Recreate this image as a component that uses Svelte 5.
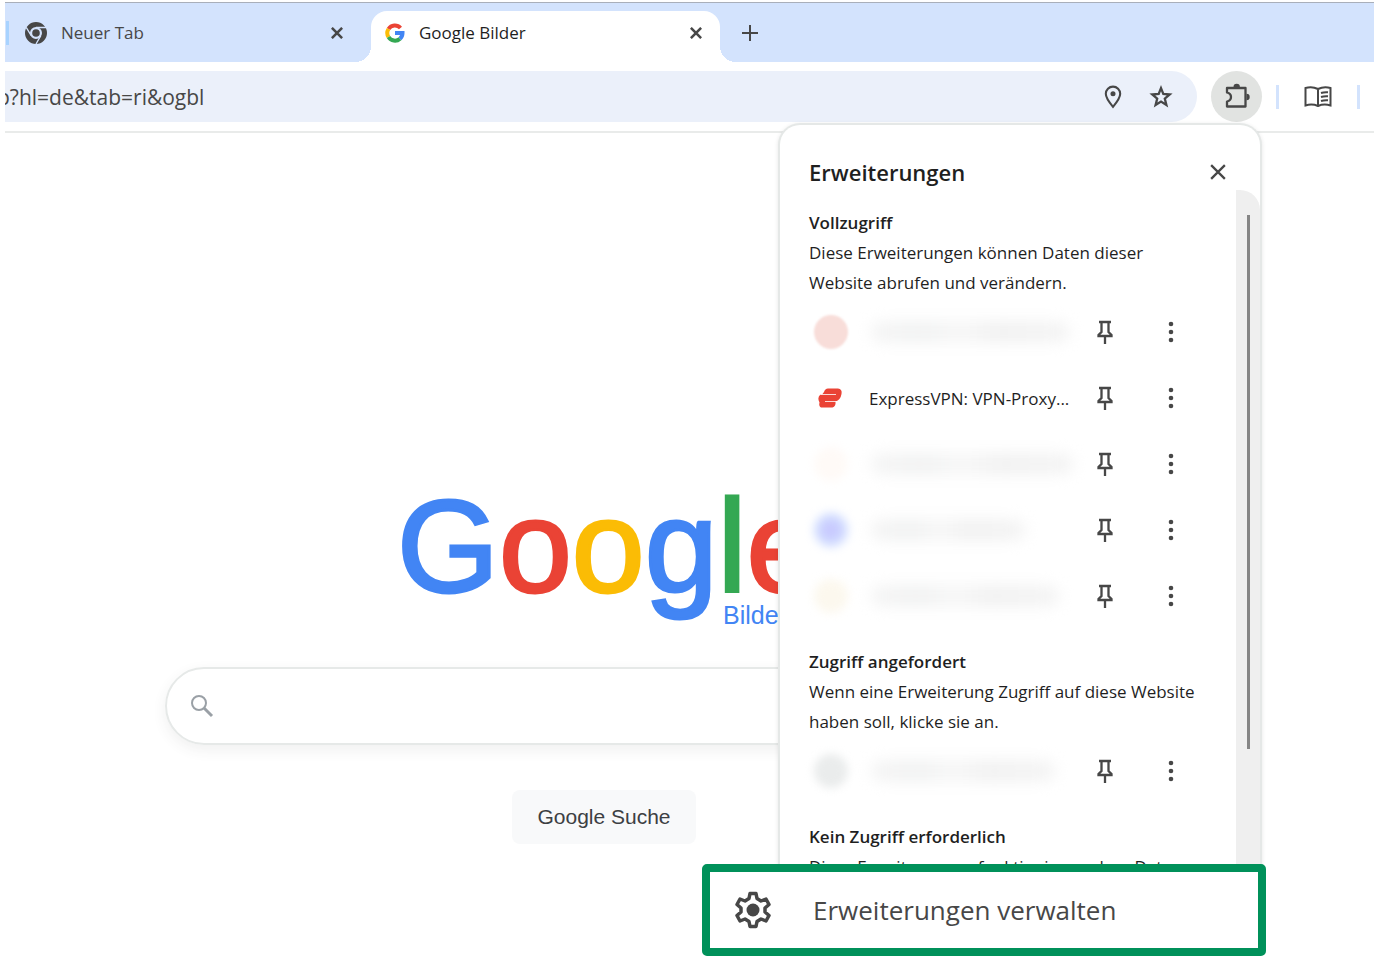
<script>
  const fullAccess = [
    { kind: 'rose', width: 200 },
    { kind: 'express', name: 'ExpressVPN: VPN-Proxy...' },
    { kind: 'peach', width: 204 },
    { kind: 'violet', width: 156 },
    { kind: 'sand', width: 190 }
  ];
  const requested = [{ kind: 'grey', width: 186 }];
  let url = $state('p?hl=de&tab=ri&ogbl');
  let query = $state('');
</script>

{#snippet cross(size, weight)}
  <svg width={size} height={size} viewBox="0 0 14 14" fill="none" stroke="currentColor" stroke-width={weight} aria-hidden="true">
    <path d="M1 1 13 13M13 1 1 13" />
  </svg>
{/snippet}

{#snippet extension(item)}
  <li class="row">
    <span class="badge {item.kind}">
      {#if item.kind === 'express'}
        <svg width="26" height="24" viewBox="0 0 26 24" fill="none" aria-hidden="true">
          <path d="M11 2.500H21Q25.500 3 24.500 8Q23.500 14 18.500 15.500Q19 20.500 15.500 21.500H4Q1.500 20 2.500 16.500Q0 12 3 9Q6 8.500 7 6Q8 2.500 11 2.500Z" fill="#ea4335" />
          <path d="M4 8.500H19M8 15.500H22" stroke="#fff" stroke-opacity=".8" stroke-width="1.200" />
        </svg>
      {/if}
    </span>
    {#if item.name}
      <button class="name">{item.name}</button>
    {:else}
      <span class="smudge"><i style="width: {item.width}px"></i></span>
    {/if}
    <button class="icon" aria-label="Anpinnen">
      <svg width="20" height="26" viewBox="0 0 20 26" fill="none" stroke="#474747" stroke-width="2.300" aria-hidden="true">
        <path d="M4 3H16M6.500 3V13L3.500 16V17H16.500V16L13.500 13V3M10 17V25" />
      </svg>
    </button>
    <button class="icon" aria-label="Weitere Optionen">
      <svg width="6" height="24" viewBox="0 0 6 24" fill="#474747" aria-hidden="true">
        <circle cx="3" cy="4" r="2.300" /><circle cx="3" cy="12" r="2.300" /><circle cx="3" cy="20" r="2.300" />
      </svg>
    </button>
  </li>
{/snippet}

<div class="window">
  <header class="tabs">
    <div class="tab">
      <span class="tick"></span>
      <svg width="22" height="22" viewBox="0 0 22 22" fill="none" aria-hidden="true">
        <circle cx="11" cy="11" r="8.500" stroke="#474747" stroke-width="5" />
        <circle cx="11" cy="11" r="3.800" fill="#474747" />
        <path d="M11 5.500H21M6.200 13.700 1.200 5.300M15.800 13.700 11 22" stroke="#d3e3fd" stroke-width="1.300" />
      </svg>
      <span class="label">Neuer Tab</span>
      <button class="icon" aria-label="Tab schließen">{@render cross(12, 3)}</button>
    </div>
    <div class="tab active">
      <svg width="20" height="20" viewBox="0 0 20 20" fill="none" stroke-width="4" aria-hidden="true">
        <path d="M3.500 6A7.500 7.500 0 0 1 15.500 5" stroke="#ea4335" />
        <path d="M3.500 14A7.500 7.500 0 0 1 3.500 6" stroke="#fbbc05" />
        <path d="M15 15.700A7.500 7.500 0 0 1 3.500 14" stroke="#34a853" />
        <path d="M10 10H17.500Q17.500 13.500 15 15.700" stroke="#4285f4" />
      </svg>
      <span class="label">Google Bilder</span>
      <button class="icon" aria-label="Tab schließen">{@render cross(12, 3)}</button>
    </div>
    <button class="icon plus" aria-label="Neuer Tab">
      <svg width="16" height="16" viewBox="0 0 16 16" stroke="#474747" stroke-width="2" aria-hidden="true"><path d="M8 0V16M0 8H16" /></svg>
    </button>
  </header>

  <div class="toolbar">
    <div class="omnibox">
      <input aria-label="Adresse" type="text" bind:value={url} />
      <button class="icon" aria-label="Standort">
        <svg width="18" height="24" viewBox="0 0 20 26" fill="none" stroke="#474747" stroke-width="2.300" aria-hidden="true">
          <path d="M10 24Q2 14.500 2 9.500A8 8 0 0 1 18 9.500Q18 14.500 10 24Z" />
          <circle cx="10" cy="9.500" r="2.800" fill="#474747" stroke="none" />
        </svg>
      </button>
      <button class="icon" aria-label="Lesezeichen">
        <svg width="24" height="24" viewBox="0 0 24 24" fill="none" stroke="#474747" stroke-width="2.300" aria-hidden="true">
          <path d="M12 3.200 14.300 9 20.700 9.500 15.800 13.600 17.400 20 12 16.600 6.600 20 8.200 13.600 3.300 9.500 9.700 9Z" />
        </svg>
      </button>
    </div>
    <button class="icon puzzle" aria-label="Erweiterungen">
      <svg width="28" height="28" viewBox="0 0 28 28" fill="none" stroke="#474747" stroke-width="2.300" stroke-linejoin="round" aria-hidden="true">
        <path d="M4 5H22.500V23.500H4V18.500Q8 17.500 8 14Q8 10.500 4 9.500Z" />
        <path d="M10.500 4A3.200 3.200 0 0 1 16.900 4ZM23.500 10.800A3.200 3.200 0 0 1 23.500 17.200Z" fill="#474747" stroke="none" />
      </svg>
    </button>
    <span class="tick"></span>
    <button class="icon book" aria-label="Leseliste">
      <svg width="30" height="24" viewBox="0 0 30 24" fill="none" stroke="#474747" stroke-width="2" aria-hidden="true">
        <path d="M15 4Q9 1 2.500 3V20.500Q9 18.500 15 21Q21 18.500 27.500 20.500V3Q21 1 15 4V21" />
        <path d="M18 8Q21 7 25 7.300M18 12Q21 11 25 11.300M18 16Q21 15 25 15.300" />
      </svg>
    </button>
    <span class="tick"></span>
  </div>

  <main>
    <h1 class="logo">
      <span class="word"><span class="b">G</span><span class="r">o</span><span class="y">o</span><span class="b">g</span><span class="g">l</span><span class="r">e</span></span>
      <span class="sub">Bilder</span>
    </h1>
    <form>
      <label class="search">
        <svg width="24" height="24" viewBox="0 0 24 24" fill="none" stroke="#9aa0a6" stroke-width="2" aria-hidden="true">
          <circle cx="9" cy="9" r="7" /><path d="M14 14 22 22" stroke-width="3" />
        </svg>
        <input type="text" aria-label="Suche" bind:value={query} />
      </label>
      <button type="button" class="submit">Google Suche</button>
    </form>
  </main>

  <aside class="popup">
    <div class="card">
      <div class="head">
        <h2>Erweiterungen</h2>
        <button class="icon" aria-label="Schließen">{@render cross(16, 2)}</button>
      </div>
      <div class="body">
        <div class="list">
          <section>
            <h3>Vollzugriff</h3>
            <p>Diese Erweiterungen können Daten dieser Website abrufen und verändern.</p>
            <ul>{#each fullAccess as item}{@render extension(item)}{/each}</ul>
          </section>
          <section>
            <h3>Zugriff angefordert</h3>
            <p>Wenn eine Erweiterung Zugriff auf diese Website haben soll, klicke sie an.</p>
            <ul>{#each requested as item}{@render extension(item)}{/each}</ul>
          </section>
          <section>
            <h3>Kein Zugriff erforderlich</h3>
            <p>Diese Erweiterungen funktionieren ohne Daten</p>
          </section>
        </div>
        <div class="track"><span></span></div>
      </div>
    </div>
    <button class="manage">
      <svg width="40" height="40" viewBox="0 0 40 40" fill="none" stroke="#474747" stroke-width="3.500" stroke-linejoin="round" aria-hidden="true">
        <path d="M17 3.500H23L24 8.500 28 11 33 9 36 14.500 32 18V22L36 25.500 33 31 28 29 24 31.500 23 36.500H17L16 31.500 12 29 7 31 4 25.500 8 22V18L4 14.500 7 9 12 11 16 8.500Z" />
        <circle cx="20" cy="20" r="6.500" fill="#474747" stroke="none" />
      </svg>
      Erweiterungen verwalten
    </button>
  </aside>
</div>

<style>
  :global(body) { margin: 0; background: #fff; }
  * { box-sizing: border-box; }
  button, input { font: inherit; color: inherit; border: 0; background: none; padding: 0; margin: 0; outline: 0; }
  button { cursor: pointer; }
  h1, h2, h3, p, ul { margin: 0; padding: 0; font-weight: 400; }
  svg { display: block; flex: none; }

  .window {
    position: relative;
    min-height: 966px;
    margin: 0 1px 0 5px;
    padding-top: 2px;
    overflow: hidden;
    font-family: "Open Sans", "Noto Sans", sans-serif;
    font-size: 17px;
    color: #1f1f1f;
  }
  .icon { display: grid; place-items: center; flex: none; color: #474747; }

  .tabs { display: flex; height: 60px; background: #d3e3fd; border-top: 1px solid #a9afba; }
  .tab { position: relative; display: flex; align-items: center; width: 366px; padding: 0 21px 0 0; color: #474747; }
  .tab .label { flex: 1; padding-left: 14px; }
  .tab .icon { width: 26px; height: 26px; }
  .tick { flex: none; width: 3px; height: 24px; background: #d3e3fd; }
  .tab .tick { background: #a8d3ff; margin: 0 16px 0 1px; }
  .tab.active { width: 349px; height: 51px; margin-top: 8px; padding: 0 11px 8px 14px; background: #fff; border-radius: 16px 16px 0 0; color: #1f1f1f; }
  .tab.active::before, .tab.active::after { content: ""; position: absolute; bottom: 0; width: 16px; height: 16px; }
  .tab.active::before { right: 100%; background: radial-gradient(circle at 0 0, transparent 16px, #fff 16px); }
  .tab.active::after { left: 100%; background: radial-gradient(circle at 100% 0, transparent 16px, #fff 16px); }
  .plus { width: 32px; margin-left: 14px; }

  .toolbar { display: flex; align-items: center; height: 71px; padding-right: 14px; border-bottom: 2px solid #e9ebea; }
  .omnibox { flex: 1; display: flex; align-items: center; gap: 24px; height: 51px; padding-right: 24px; background: #ebf0fa; border-radius: 0 26px 26px 0; }
  .omnibox input { flex: 1; min-width: 0; font-size: 21px; line-height: 30px; text-indent: -8px; color: #474747; }
  .omnibox .icon { width: 24px; height: 28px; }
  .puzzle { width: 51px; height: 51px; margin: 0 14px; border-radius: 50%; background: #e1e3e1; }
  .book { width: 30px; margin: 0 24px; }

  main { display: flex; flex-direction: column; align-items: center; padding: 348px 171px 0 0; }
  .logo { display: flex; flex-direction: column; width: 414px; }
  .word { font: 131px/132px "Liberation Sans", Arial, sans-serif; white-space: nowrap; -webkit-text-stroke: 3px; }
  .b { color: #4285f4; }
  .r { color: #ea4335; }
  .y { color: #fbbc05; }
  .g { color: #34a853; }
  .sub { margin: -12px 0 0 326px; font: 25px/28px "Liberation Sans", Arial, sans-serif; color: #4285f4; }
  form { display: flex; flex-direction: column; align-items: center; gap: 45px; width: 100%; padding: 0 160px; margin-top: 38px; }
  .search { display: flex; align-items: center; gap: 20px; width: 100%; height: 78px; padding: 0 23px; border: 2px solid #e6e9e8; border-radius: 39px; box-shadow: 0 5px 14px rgba(60, 64, 67, .08); }
  .search input { flex: 1; min-width: 0; font-size: 22px; }
  .submit { height: 54px; padding: 0 25px; border-radius: 8px; background: #f8f9fa; color: #3c4043; font: 21px "Liberation Sans", Arial, sans-serif; }

  .popup { position: absolute; top: 123px; right: 112px; width: 484px; }
  .card { border: 2px solid #e5e8e7; border-bottom: 0; border-radius: 22px 22px 0 0; background: #fff; overflow: hidden; box-shadow: 0 1px 4px rgba(0, 0, 0, .1); }
  .head { display: flex; justify-content: space-between; align-items: center; height: 65px; padding: 28px 34px 0 29px; }
  h2 { font-size: 22px; line-height: 30px; font-weight: 600; }
  .body { display: flex; height: 674px; overflow: hidden; }
  .list { flex: 1; display: flex; flex-direction: column; gap: 18px; min-width: 0; padding: 18px 0 0 29px; }
  h3, p { line-height: 30px; }
  h3 { font-size: 17px; font-weight: 600; }
  p { max-width: 395px; }
  ul { list-style: none; padding-top: 1px; }
  .row { display: flex; align-items: center; height: 66px; padding-right: 32px; }
  .row .icon { width: 66px; height: 40px; }
  .badge { display: grid; place-items: center; flex: none; width: 34px; height: 34px; margin: 0 22px 0 5px; border-radius: 50%; }
  .badge.express { width: 26px; margin: 0 26px 0 8px; }
  .badge.rose { background: #f8ddd9; filter: blur(1px); }
  .badge.peach { background: #fffaf7; filter: blur(4px); }
  .badge.violet { background: radial-gradient(#c4c0ff, #d4e4ff 75%); filter: blur(5px); }
  .badge.sand { background: #fcf8ee; filter: blur(5px); }
  .badge.grey { background: #eaecec; filter: blur(4px); }
  .name { flex: 1; min-width: 0; text-align: left; white-space: nowrap; }
  .smudge { flex: 1; min-width: 0; }
  .smudge i { display: block; height: 22px; border-radius: 11px; background: linear-gradient(90deg, #f6f6f6, #f1f2f2 25%, #f7f7f7 45%, #f1f1f1 65%, #f5f5f5); filter: blur(7px); }
  .track { flex: none; display: flex; justify-content: center; width: 24px; padding: 25px 0 0; border-radius: 0 20px 0 0; background: #efefef; }
  .track span { width: 3px; height: 534px; background: #858585; }

  .manage { display: flex; align-items: center; gap: 40px; width: 564px; height: 92px; margin-left: -76px; padding-left: 23px; position: relative; border: 8px solid #00915a; border-radius: 5px; background: #fff; color: #474747; font-size: 26px; }
</style>
